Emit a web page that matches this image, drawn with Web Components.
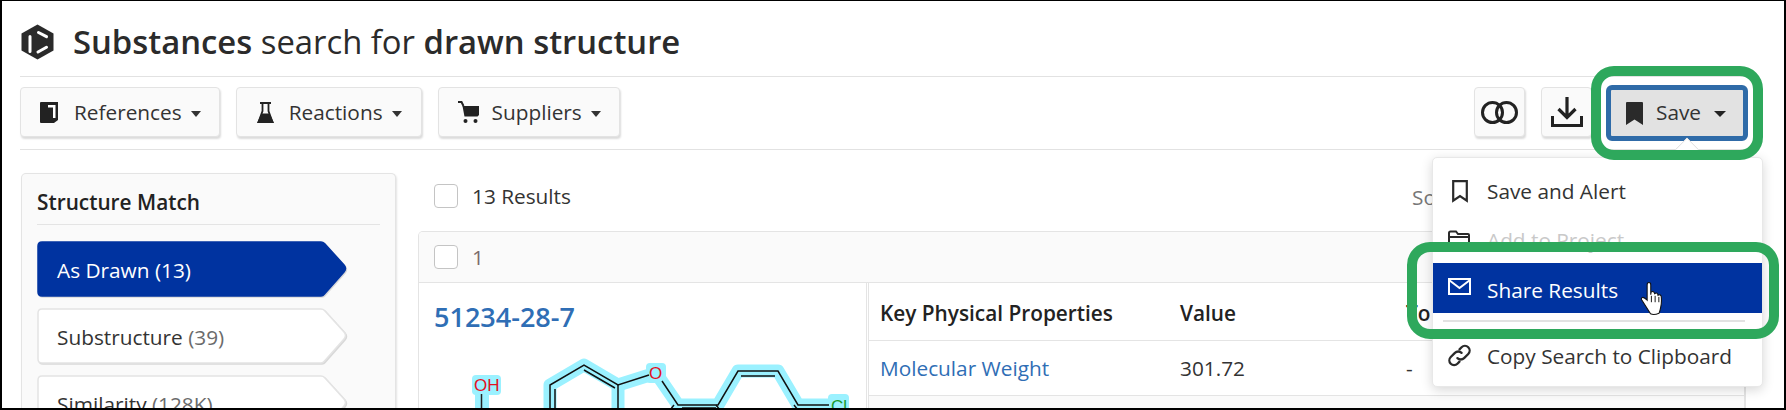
<!DOCTYPE html>
<html>
<head>
<meta charset="utf-8">
<style>
html,body{margin:0;padding:0;background:#fff;}
body{width:1786px;height:410px;overflow:hidden;font-family:"Open Sans","Noto Sans",sans-serif;color:#2b2b2b;}
</style>
</head>
<body>
<results-page></results-page>
<template id="btn-tpl">
<style>
:host{display:inline-flex;align-items:center;height:50px;box-sizing:border-box;background:#fafafa;border:1px solid #e3e3e3;border-radius:4px;box-shadow:1px 2px 2px #dcdcdc;font-size:20.8px;color:#333;padding:0 18px 0 19px;}
.text{margin-left:var(--text-gap,15px)}
.caret{width:0;height:0;border:5.5px solid transparent;border-top:6px solid #333;border-bottom:0;margin-left:9px;margin-top:4px;}
</style>
<span id="ic" style="display:flex"></span><span class="text"><slot></slot></span><span class="caret"></span>
</template>
<script>
const icons={
  logo:'<svg width="33" height="36" viewBox="0 0 33 36"><path d="M16.500.5 32.500 9.500v17L16.500 35.500.5 26.500v-17z" fill="#2a2a2a"/><path d="M9 12.500v15M17.500 8.500l8 4.200M17 28l8.500-4.700" stroke="#fff" stroke-width="3" stroke-linecap="round" fill="none"/></svg>',
  book:'<svg width="19" height="21" viewBox="0 0 19 21"><path d="M0 1q0-1 1-1h17v18l-4 3H1q-1 0-1-1z" fill="#222"/><path d="M8 3h7.500v13H13V5.500H8z" fill="#fff"/></svg>',
  flask:'<svg width="17" height="21" viewBox="0 0 17 21"><path d="M3 1h11M5.500 1v8L1.500 20h14L11.500 9V1" fill="none" stroke="#222" stroke-width="1.800"/><path d="M4.500 11.500h8L17 21H0z" fill="#222"/></svg>',
  cart:'<svg width="21" height="22" viewBox="0 0 21 22"><path d="M0 1h3.500l2 4" fill="none" stroke="#222" stroke-width="2"/><path d="M4.500 5H21v9l-1.500 1.500H6.500z" fill="#222"/><circle cx="7.500" cy="20" r="2" fill="#222"/><circle cx="17.500" cy="20" r="2" fill="#222"/></svg>',
  venn:'<svg width="37" height="23" viewBox="0 0 37 23"><circle cx="11.500" cy="11.500" r="10" fill="none" stroke="#222" stroke-width="3"/><circle cx="25.500" cy="11.500" r="10" fill="none" stroke="#222" stroke-width="3"/></svg>',
  download:'<svg width="32" height="30" viewBox="0 0 32 30"><path d="M16 0v20M7.500 12l8.500 8.500 8.500-8.500" fill="none" stroke="#222" stroke-width="3.200"/><path d="M1.500 19v9.500h29V19" fill="none" stroke="#222" stroke-width="3"/></svg>',
  bookmark:'<svg width="17" height="23" viewBox="0 0 17 23"><path d="M0 1q0-1 1-1h15q1 0 1 1v22l-8.500-5.500L0 23z" fill="#2a2a2a"/></svg>',
  bookmarkO:'<svg width="16" height="23" viewBox="0 0 16 23"><path d="M1.200 1.200h13.600v19.500L8 16 1.200 20.700z" fill="none" stroke="#2a2a2a" stroke-width="2.200"/></svg>',
  folder:'<svg width="22" height="20" viewBox="0 0 22 20"><path d="M1 18V3q0-1.500 1.500-1.500H8L10 4h10q1 0 1 1v13q0 1-1 1H2q-1 0-1-1zM1 7h20" fill="none" stroke="#2a2a2a" stroke-width="2"/></svg>',
  mail:'<svg width="23" height="17" viewBox="0 0 23 17"><path d="M1 1h21v15H1zM1 2l10.500 8L22 2" fill="none" stroke="#fff" stroke-width="2"/></svg>',
  link:'<svg width="25" height="25" viewBox="0 0 24 24"><g fill="none" stroke="#2a2a2a" stroke-width="2.200" stroke-linecap="round"><path d="M10 14.500a4.500 4.500 0 0 0 6.400 0l4-4a4.500 4.500 0 0 0-6.400-6.400l-2 2"/><path d="M14 9.500a4.500 4.500 0 0 0-6.400 0l-4 4a4.500 4.500 0 0 0 6.400 6.400l2-2"/></g></svg>',
  hand:'<svg width="28" height="33" viewBox="0 0 24 31"><path d="M6.500 2.500q0-2 1.700-2t1.700 2V12l.3-2.500q2-1.500 3 .5l.3 1q2-1.500 3 .5l.2 1q2-1.200 3 .8.700 5.500-.500 10.500-.5 3-1.500 5.500-5 2-8 .5L1.500 17q-1-2 .7-2.500 1.500-.3 4.300 2.500z" fill="#fff" stroke="#111" stroke-width="1"/><path d="M10.500 13v6M14 13v6M17.500 14v5" stroke="#111" stroke-width=".9"/></svg>'
}

class ActionButton extends HTMLElement{
  constructor(){
    super()
    this.attachShadow({mode:'open'})
    this.shadowRoot.appendChild(document.getElementById('btn-tpl').content.cloneNode(true))
  }
  connectedCallback(){
    this.shadowRoot.getElementById('ic').innerHTML=icons[this.getAttribute('icon')]
  }
}
customElements.define('action-button',ActionButton)

class IconButton extends HTMLElement{
  constructor(){
    super()
    this.attachShadow({mode:'open'})
  }
  connectedCallback(){
    this.shadowRoot.innerHTML=`<style>
    :host{display:flex;align-items:center;justify-content:center;width:51px;height:50px;box-sizing:border-box;background:#fafafa;border:1px solid #e3e3e3;border-radius:4px;box-shadow:1px 2px 2px #dcdcdc;}
    </style>${icons[this.getAttribute('icon')]}`
  }
}
customElements.define('icon-button',IconButton)

class SaveButton extends HTMLElement{
  constructor(){
    super()
    this.attachShadow({mode:'open'})
    this.shadowRoot.innerHTML=`<style>
    :host{display:flex;align-items:center;width:142px;height:56px;box-sizing:border-box;background:#e2e2e2;border:5px solid #2f6ba8;border-radius:6px;font-size:20.8px;color:#333;padding-left:15px;margin:-2px -2px 0 -2px;}
    span{margin:-2px 0 0 13px}
    i{width:0;height:0;border:6px solid transparent;border-top:6px solid #222;border-bottom:0;margin-left:13px;margin-top:2px}
    </style>${icons.bookmark}<span>Save</span><i></i>`
  }
}
customElements.define('save-button',SaveButton)

class MatchTab extends HTMLElement{
  connectedCallback(){
    if(this.shadowRoot)return
    this.attachShadow({mode:'open'})
    const on=this.hasAttribute('active')
    this.shadowRoot.innerHTML=`<style>
    :host{display:block;position:relative;width:309px;height:56px;font-size:20.8px;color:#333;}
    svg{display:block;position:absolute;left:0;top:0}
    div{position:relative;line-height:58px;padding-left:20px;white-space:nowrap}
    :host([active]) div{color:#fff}
    ::slotted(span){color:#6b6b6b}
    </style>
    <svg width="312" height="59" viewBox="0 0 312 59"><path d="M5 1H284q2 0 3.500 1.500L307 24q3 3.500 0 7L287.500 53q-1.500 2-3.500 2H5q-4 0-4-4V5q0-4 4-4z" fill="${on?'#0033a0':'#fff'}" stroke="${on?'#0033a0':'#e4e4e4'}" stroke-width="1.500" style="filter:drop-shadow(1px 1.500px .5px #d8d8d8)"/></svg>
    <div><slot></slot></div>`
  }
}
customElements.define('match-tab',MatchTab)

class MatchPanel extends HTMLElement{
  constructor(){
    super()
    this.attachShadow({mode:'open'})
    this.shadowRoot.innerHTML=`<style>
    :host{display:block;box-sizing:border-box;width:375px;height:260px;background:#fafafa;border:1px solid #e4e4e4;border-bottom:0;border-radius:5px 5px 0 0;box-shadow:1px 1px 2px #e4e4e4;padding:0 15px;overflow:hidden}
    h3{margin:0;font-size:20.8px;font-weight:600;line-height:28px;padding:14px 0 8px;border-bottom:1px solid #e4e4e4;color:#222}
    .tabs{display:flex;flex-direction:column;gap:11px;margin-top:16px}
    </style><h3>Structure Match</h3><div class="tabs"><slot></slot></div>`
  }
}
customElements.define('match-panel',MatchPanel)

class CheckBox extends HTMLElement{
  constructor(){
    super()
    this.attachShadow({mode:'open'})
    this.shadowRoot.innerHTML=`<style>:host{display:block;width:24px;height:24px;box-sizing:border-box;border:1px solid #c4c4c4;border-radius:4px;background:#fff}</style>`
  }
}
customElements.define('check-box',CheckBox)

class ResultCard extends HTMLElement{
  constructor(){
    super()
    this.attachShadow({mode:'open'})
    this.shadowRoot.innerHTML=`<style>
    :host{display:block;box-sizing:border-box;width:1328px;height:179px;border:1px solid #e4e4e4;border-right-width:2px;border-bottom:0;border-radius:5px 5px 0 0;overflow:hidden;background:#fff}
    .head{display:flex;align-items:center;gap:14px;height:51px;box-sizing:border-box;padding-left:15px;background:#fafafa;border-bottom:1px solid #e4e4e4;color:#7b6b6b;font-size:20.8px}
    .body{display:grid;grid-template-columns:447px 1fr;height:127px}
    .left{padding:16px 0 0 15px;position:relative;overflow:hidden}
    .left a{font-size:27px;font-weight:600;color:#2f6eb5;line-height:36px;display:block}
    .right{border-left:3px double #e4e4e4;overflow:hidden}
    .row{display:grid;grid-template-columns:300px 226px 1fr;padding-left:11px;font-size:20.8px;align-items:center}
    .th{height:58px;box-sizing:border-box;padding-top:2px;font-weight:600;color:#222;border-bottom:1px solid #e4e4e4}
    .td{height:55px;box-sizing:border-box;border-bottom:1px solid #e4e4e4;color:#333}
    .td a{color:#2f6eb5}
    .more{height:20px;background:#fafafa}
    svg{position:absolute;left:0;top:0}
    text{font:17px "Liberation Sans",sans-serif}
    </style>
    <div class="head"><check-box></check-box><span>1</span></div>
    <div class="body">
      <div class="left">
        <a>51234-28-7</a>
        <svg width="447" height="127" viewBox="419 283 447 127">
          <g fill="none" stroke="#9bf1ff" stroke-width="13" stroke-linejoin="round" stroke-linecap="round">
            <path d="M550 420V385L584 365L618 385V420"/>
            <path d="M618 385L656 373L678 405H718L738 371H778L798 405H838"/>
          </g>
          <path d="M482 390V420" stroke="#9bf1ff" stroke-width="14" fill="none"/>
          <rect x="472" y="375" width="29" height="20" rx="4" fill="#9bf1ff"/>
          <rect x="646" y="363" width="20" height="20" rx="4" fill="#9bf1ff"/>
          <rect x="828" y="394" width="21" height="20" rx="4" fill="#9bf1ff"/>
          <path d="M481.500 394V412" stroke="#222" stroke-width="1.500" fill="none"/>
          <g fill="none" stroke="#111" stroke-width="1.500">
            <path d="M550 412V385L584 365 618 385 649 375"/>
            <path d="M555 412V389M584 370 615 388"/>
            <path d="M618 385V412"/>
            <path d="M662 381 678 405H718L738 371H778L798 405H829"/>
            <path d="M741 376H775"/>
            <path d="M674 405 670 410M682 408H716M716 405 720 410M794 405 798 410"/>
          </g>
          <text x="474" y="391" fill="#e3101f">OH</text>
          <text x="649" y="379" fill="#e3101f">O</text>
          <text x="831" y="412" fill="#1a9a2c">Cl</text>
        </svg>
      </div>
      <div class="right">
        <div class="row th"><span>Key Physical Properties</span><span>Value</span><span>To</span></div>
        <div class="row td"><a>Molecular Weight</a><span>301.72</span><span>-</span></div>
        <div class="more"></div>
      </div>
    </div>`
  }
}
customElements.define('result-card',ResultCard)

class SaveMenu extends HTMLElement{
  constructor(){
    super()
    this.attachShadow({mode:'open'})
    this.shadowRoot.innerHTML=`<style>
    :host{display:block;position:absolute;left:1430px;top:156px;width:331px;height:230px;box-sizing:border-box;background:#fff;border:1px solid #e8e8e8;border-radius:5px;box-shadow:0 3px 12px rgba(0,0,0,.16);font-size:20.8px;color:#333;padding-top:7px}
    .tip{position:absolute;left:240px;top:-15px;width:28px;height:28px;box-sizing:border-box;background:#fff;border-left:1px solid #e0e0e0;border-top:1px solid #e0e0e0;transform:rotate(45deg);clip-path:polygon(0 0,100% 0,0 100%)}
    .item{display:flex;align-items:center;height:50px;box-sizing:border-box;padding-left:15px;position:relative;white-space:nowrap}
    .item>span{position:relative}
    .muted{color:#c9c9c9}
    .on{background:#0033a0;color:#fff}
    .on>span{top:2px}
    hr{border:0;border-top:2px solid #e2e2e2;margin:7px 17px 9px 10px}
    .ic{width:39px;display:flex;flex:none}
    </style>
    <div class="tip"></div>
    <div class="item" style="height:51px"><div class="ic" style="margin-top:2px"><span style="margin-left:4px;display:flex">${icons.bookmarkO}</span></div><span>Save and Alert</span></div>
    <div class="item muted" style="height:47px"><div class="ic">${icons.folder}</div><span>Add to Project</span></div>
    <div class="item on"><div class="ic" style="margin-top:-4px">${icons.mail}</div><span>Share Results</span></div>
    <hr>
    <div class="item"><div class="ic" style="margin-left:-1px;margin-right:1px;margin-top:-2px">${icons.link}</div><span>Copy Search to Clipboard</span></div>`
  }
}
customElements.define('save-menu',SaveMenu)

class HighlightBox extends HTMLElement{
  constructor(){
    super()
    this.attachShadow({mode:'open'})
    this.shadowRoot.innerHTML=`<style>:host{display:block;position:absolute;box-sizing:border-box;border:10px solid #2ea85c;border-radius:23px;pointer-events:none}</style>`
  }
}
customElements.define('highlight-box',HighlightBox)

class ResultsPage extends HTMLElement{
  constructor(){
    super()
    this.attachShadow({mode:'open'})
    this.shadowRoot.innerHTML=`<style>
    :host{display:block;position:relative;box-sizing:border-box;width:1786px;height:410px;overflow:hidden;border:2px solid #000;border-width:1px 2px 2px 2px;font-family:"Open Sans","Noto Sans",sans-serif}
    .wrap{padding:0 38px 0 18px;}
    h1{margin:0;display:flex;align-items:center;gap:19px;height:76px;box-sizing:border-box;padding:6px 0 0 1px;font-size:32.8px;font-weight:400;color:#2b2b2b;white-space:nowrap;border-bottom:1px solid #e2e2e2}
    h1 b{font-weight:600}
    .bar{display:flex;align-items:flex-start;height:73px;box-sizing:border-box;padding-top:10px;gap:16px;border-bottom:1px solid #e2e2e2;}
    .bar .sp{flex:1}
    .main{display:grid;grid-template-columns:397px 1fr;padding:23px 0 0 1px;}
    .count{display:flex;align-items:center;gap:14px;height:24px;padding:11px 0 0 16px;font-size:20.8px;color:#333;margin-bottom:23px}
    .so{position:absolute;left:1410px;top:182px;font-size:20.8px;line-height:28px;color:#777}
    .hand{position:absolute;left:1637px;top:281px;display:flex}
    </style>
    <div class="wrap">
      <h1>${icons.logo}<span><b>Substances</b> search for <b>drawn structure</b></span></h1>
      <div class="bar">
        <action-button icon="book">References</action-button>
        <action-button icon="flask" style="padding:0 19px 0 20px">Reactions</action-button>
        <action-button icon="cart" style="padding-right:18px;--text-gap:13px">Suppliers</action-button>
        <span class="sp"></span>
        <icon-button icon="venn"></icon-button>
        <icon-button icon="download"></icon-button>
        <save-button></save-button>
      </div>
      <div class="main">
        <match-panel>
          <match-tab active>As Drawn (13)</match-tab>
          <match-tab>Substructure <span>(39)</span></match-tab>
          <match-tab>Similarity <span>(128K)</span></match-tab>
        </match-panel>
        <div>
          <div class="count"><check-box></check-box><span>13 Results</span></div>
          <result-card></result-card>
        </div>
      </div>
    </div>
    <span class="so">So</span>
    <save-menu></save-menu>
    <highlight-box style="left:1589px;top:65px;width:172px;height:94px"></highlight-box>
    <highlight-box style="left:1405px;top:241px;width:372px;height:97px"></highlight-box>
    <span class="hand">${icons.hand}</span>`
  }
}
customElements.define('results-page',ResultsPage)
</script>
</body>
</html>
